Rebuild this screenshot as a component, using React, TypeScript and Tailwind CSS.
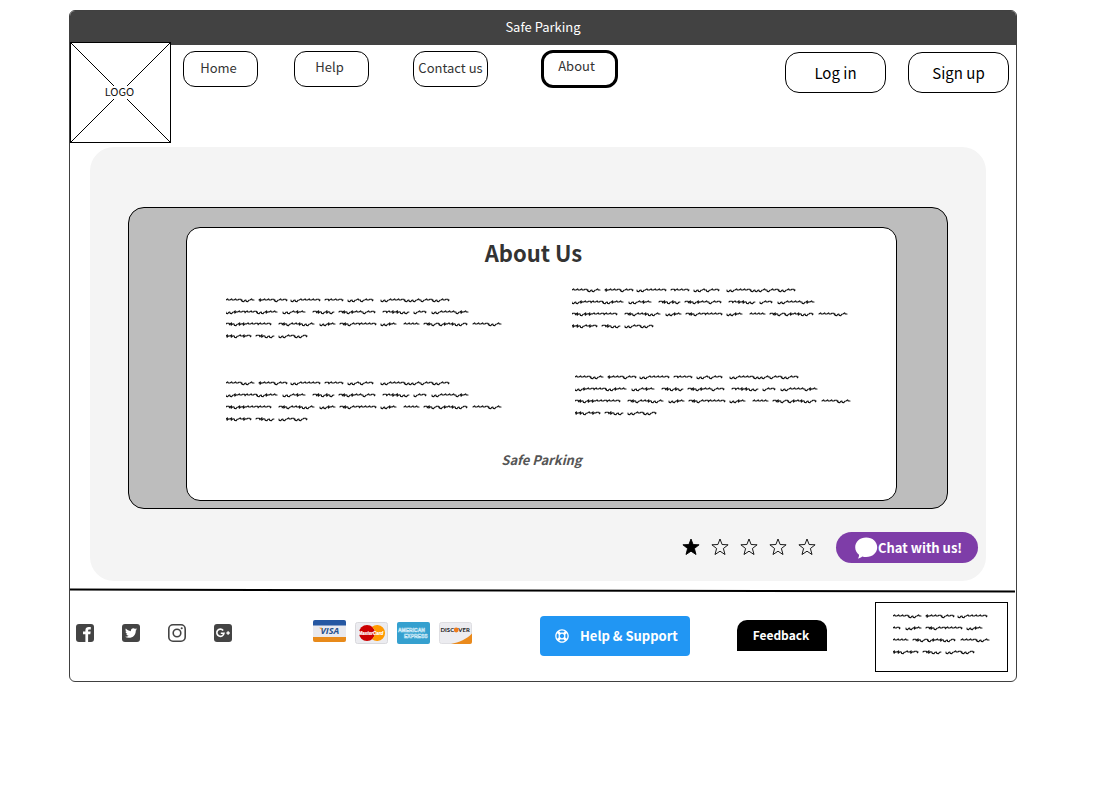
import React from "react";
import { FaRegLifeRing, FaTwitter } from "react-icons/fa";

/* ---------- Scribbled placeholder copy ---------- */

type Word = [start: number, end: number, strokes: string];

// Each stroke is a list of pen moves inside a cell that is one unit wide.
const STROKES: Record<string, [number, number][]> = {
  n: [[0.4, -1.1], [0.15, 1], [0.45, 0.1]],
  r: [[0.2, -0.8], [0.55, 0], [0.1, 1.6], [0.15, -0.8]],
  u: [[0.05, 1.5], [0.4, 0.1], [0.25, -1.4], [0.3, -0.2]],
  x: [[0.35, -1.2], [-0.1, 2.4], [0.4, -1.3], [0.35, 0.1]],
};

function wordPath([start, end, strokes]: Word, y: number) {
  const cell = (end - start) / strokes.length;
  let d = `M${start} ${y}`;
  for (const key of strokes) {
    for (const [dx, dy] of STROKES[key]) {
      d += `l${(dx * cell).toFixed(2)} ${dy}`;
    }
  }
  return d;
}

const PARAGRAPH: Word[][] = [
  [[0, 28, "nnnruun"], [33, 61, "xnnrunr"], [65, 94, "uunnnnr"], [99, 117, "rnnr"], [122, 147, "uununr"], [155, 223, "uunnnruuununruunr"]],
  [[0, 51, "uuxnrnnruuxnn"], [57, 79, "uunxn"], [87, 108, "rxuxu"], [113, 149, "rxuxnnunr"], [157, 183, "rnxxuu"], [188, 200, "unr"], [206, 242, "uunnnnuxn"]],
  [[0, 45, "rxuxxnnrnnr"], [53, 88, "rxunnxuun"], [94, 109, "uuxn"], [114, 150, "rxunrnnnr"], [155, 170, "uuxn"], [178, 193, "nnnn"], [198, 241, "rxuruxnxuur"], [247, 275, "nnnruun"]],
  [[0, 25, "xxunxr"], [30, 48, "rxuu"], [53, 81, "uunruur"]],
];

const NOTE: Word[][] = [
  [[0, 28, "nnnruun"], [33, 61, "xnnrunr"], [65, 94, "uunnnnr"]],
  [[0, 7, "nr"], [13, 28, "uuxn"], [33, 69, "rxunrnnnr"], [74, 89, "uuxn"]],
  [[0, 15, "nnnn"], [20, 62, "rxuruxnxuur"], [68, 96, "nnnruun"]],
  [[0, 25, "xxunxr"], [30, 48, "rxuu"], [53, 81, "uunruur"]],
];

function Scribble({ lines, width }: { lines: Word[][]; width: number }) {
  return (
    <svg
      width={width}
      height={48}
      viewBox={`0 0 ${width} 48`}
      className="block shrink-0"
      fill="none"
      stroke="#111"
      strokeWidth="1.1"
      strokeLinecap="round"
      strokeLinejoin="round"
      aria-hidden="true"
    >
      {lines.map((words, row) => (
        <path key={row} d={words.map((w) => wordPath(w, 6 + row * 12)).join("")} />
      ))}
    </svg>
  );
}

/* ---------- Icons ---------- */

function FacebookIcon() {
  return (
    <svg viewBox="0 0 18 18" className="block size-[18px]" aria-hidden="true">
      <rect width="18" height="18" rx="3" fill="#444" />
      <path d="M9.4 18V10.2H7V7.6h2.4V6.2C9.4 4 10.8 3 12.6 3h2.2v2.5h-1.4c-.9 0-1.3.4-1.3 1.2v.9h2.6l-.4 2.6h-2.2V18z" fill="#fff" />
    </svg>
  );
}

function TwitterIcon() {
  return (
    <span className="flex size-[18px] items-center justify-center rounded-[3px] bg-[#444] text-white">
      <FaTwitter className="size-3" />
    </span>
  );
}

function InstagramIcon() {
  return (
    <svg viewBox="0 0 18 18" className="block size-[18px]" fill="none" stroke="#444" aria-hidden="true">
      <rect x=".8" y=".8" width="16.4" height="16.400" rx="4.200" strokeWidth="1.600" />
      <circle cx="9" cy="9" r="3.800" strokeWidth="1.600" />
      <circle cx="13.700" cy="4.300" r="1.050" fill="#444" stroke="none" />
    </svg>
  );
}

function GooglePlusIcon() {
  return (
    <svg viewBox="0 0 18 18" className="block size-[18px]" aria-hidden="true">
      <rect width="18" height="18" rx="3" fill="#444" />
      <path d="M9.200 6.400A3.600 3.600 0 1 0 10 9.200H6.800" fill="none" stroke="#fff" strokeWidth="1.600" />
      <path d="M12.400 9h3.400M14.100 7.300v3.400" stroke="#fff" strokeWidth="1.400" />
    </svg>
  );
}

function Star({ filled }: { filled?: boolean }) {
  return (
    <svg viewBox="0 0 18 18" className="block size-[18px]" aria-hidden="true">
      <path
        d="M9 1l2.1 5.500 6 .3-4.700 3.700 1.600 6L9 13.200 4 16.500l1.600-6L.9 6.800l6-.3z"
        fill={filled ? "#000" : "none"}
        stroke="#000"
        strokeWidth="0.9"
      />
    </svg>
  );
}

function ChatIcon() {
  return (
    <svg viewBox="0 0 24 24" className="block size-6" aria-hidden="true">
      <path d="M12.2 1.5c6.2 0 11 4.2 11 9.8s-4.8 9.8-11 9.8c-1.4 0-2.8-.2-4-.6-1.1 1-2.600 1.800-4.400 2 .9-1.100 1.400-2.400 1.200-3.800C2.700 16.900 1.200 14.300 1.200 11.300c0-5.600 4.800-9.800 11-9.800z" fill="#fff" />
    </svg>
  );
}

function VisaCard() {
  return (
    <svg viewBox="0 0 33 22" width="33" height="22" className="mb-0.5 block" role="img" aria-label="Visa">
      <rect width="33" height="22" rx="2" fill="#e9e9ee" />
      <path d="M2 0h29a2 2 0 0 1 2 2v3.500H0V2a2 2 0 0 1 2-2z" fill="#2557a2" />
      <path d="M0 17h33v3a2 2 0 0 1-2 2H2a2 2 0 0 1-2-2z" fill="#e88a1a" />
      <text x="16.800" y="14.300" textAnchor="middle" fontSize="9" fontWeight="700" fontStyle="italic" fontFamily="Open Sans, sans-serif" fill="#26528f">VISA</text>
      <path d="M6.300 7.800h2.600l.7 3.200C9 9.500 7.900 8.400 6.300 7.900z" fill="#e88a1a" />
    </svg>
  );
}

function MasterCard() {
  return (
    <svg viewBox="0 0 33 22" width="33" height="22" className="block" role="img" aria-label="MasterCard">
      <rect x=".5" y=".5" width="32" height="21" rx="2" fill="#ececf0" stroke="#d9d9dd" />
      <circle cx="12" cy="11" r="8" fill="#c00" />
      <path d="M17 4.800a8 8 0 1 1 0 12.400 8 8 0 0 0 0-12.400z" fill="#f90" />
      <text x="16" y="13" textAnchor="middle" fontSize="4.500" fontWeight="700" fontStyle="italic" fontFamily="Liberation Sans, sans-serif" fill="#fff" stroke="#fff" strokeWidth=".2">MasterCard</text>
    </svg>
  );
}

function AmexCard() {
  return (
    <svg viewBox="0 0 33 22" width="33" height="22" className="block" role="img" aria-label="American Express">
      <rect width="33" height="22" rx="2" fill="#35a0cf" />
      <g fill="#35a0cf" stroke="#d5edf8" strokeWidth=".5" fontFamily="Liberation Sans, sans-serif" fontWeight="700">
        <text x="1" y="9.500" fontSize="5">AMERICAN</text>
        <text x="7" y="16" fontSize="5">EXPRESS</text>
      </g>
    </svg>
  );
}

function DiscoverCard() {
  return (
    <svg viewBox="0 0 33 22" width="33" height="22" className="block" role="img" aria-label="Discover">
      <rect x=".5" y=".5" width="32" height="21" rx="2" fill="#ececf0" stroke="#dedee2" />
      <path d="M12 22C20 20.500 28 17 33 11.500V20a2 2 0 0 1-2 2z" fill="#ea8a1c" />
      <g fill="#222" fontSize="6" fontWeight="700" fontFamily="Lato, sans-serif">
        <text x="1.500" y="10">DISC</text>
        <text x="19.300" y="10">VER</text>
      </g>
      <circle cx="17.200" cy="8" r="2.400" fill="#ee7b1b" />
    </svg>
  );
}

/* ---------- Page ---------- */

const NAV_LINK =
  "flex h-9 w-[75px] items-center justify-center rounded-xl border border-black text-[13px] leading-5 whitespace-nowrap text-[#333]";

const ACCOUNT_BUTTON =
  "flex h-[41px] w-[101px] items-center justify-center rounded-[14px] border border-black bg-white text-[15px] leading-5 text-black";

function Header() {
  return (
    <div className="flex items-start">
      <div className="-mt-[3px] shrink-0">
        <svg viewBox="0 0 101 101" className="block size-[101px]" role="img" aria-label="Logo">
          <rect x=".5" y=".5" width="100" height="100" fill="#fff" stroke="#000" />
          <path d="M0 0l44 44M57 57l44 44M101 0L57 44M44 57L0 101" stroke="#000" />
          <text x="49.500" y="54" textAnchor="middle" fontSize="11" fontFamily="Noto Sans CJK SC, sans-serif" fill="#111">
            LOGO
          </text>
        </svg>
      </div>
      <nav className="mt-[5px] ml-3 flex items-center">
        <a href="#home" className={`${NAV_LINK} pr-1 pb-0.5`}>Home</a>
        <a href="#help" className={`${NAV_LINK} ml-9 pr-1 pb-1`}>Help</a>
        <a href="#contact" className={`${NAV_LINK} ml-11 pb-0.5`}>Contact us</a>
        <a
          href="#about"
          aria-current="page"
          className="ml-[53px] flex h-[38px] w-[77px] items-center justify-center rounded-xl border-3 border-black pr-1.5 pb-1.5 text-[13px] leading-5 text-[#333]"
        >
          About
        </a>
      </nav>
      <div className="mt-[7px] mr-[7px] ml-auto flex gap-[22px]">
        <button type="button" className={ACCOUNT_BUTTON}>Log in</button>
        <button type="button" className={ACCOUNT_BUTTON}>Sign up</button>
      </div>
    </div>
  );
}

function AboutPanel() {
  return (
    <section className="mr-[38px] ml-[38px] rounded-2xl border border-black bg-[#bdbdbd] pt-[19px] pr-[50px] pb-[7px] pl-[57px]">
      <div className="rounded-[14px] border border-black bg-white">
        <h1 className="pt-2 pr-4 text-center text-[22px] leading-8 font-bold text-[#333]">About Us</h1>
        <div className="mt-4 flex gap-[70px] pl-[39px]">
          <div className="flex flex-col gap-[35px] pt-2.5">
            <Scribble lines={PARAGRAPH} width={276} />
            <Scribble lines={PARAGRAPH} width={276} />
          </div>
          <div className="flex flex-col gap-[39px]">
            <Scribble lines={PARAGRAPH} width={276} />
            <div className="pl-[3px]">
              <Scribble lines={PARAGRAPH} width={276} />
            </div>
          </div>
        </div>
        <p className="pt-[25px] pb-[30px] text-center text-[13px] leading-5 font-bold text-[#555] italic">Safe Parking</p>
      </div>
    </section>
  );
}

function Footer() {
  return (
    <footer className="flex items-start pt-[9px] pr-2 pb-[9px] pl-1.5">
      <div className="mt-[22px] flex gap-7 text-[#444]">
        <a href="#facebook" aria-label="Facebook"><FacebookIcon /></a>
        <a href="#twitter" aria-label="Twitter"><TwitterIcon /></a>
        <a href="#instagram" aria-label="Instagram"><InstagramIcon /></a>
        <a href="#google-plus" aria-label="Google Plus"><GooglePlusIcon /></a>
      </div>
      <div className="mt-[18px] ml-[81px] flex items-end gap-[9px]">
        <VisaCard />
        <MasterCard />
        <AmexCard />
        <DiscoverCard />
      </div>
      <button
        type="button"
        className="mt-3.5 ml-auto flex h-10 w-[150px] items-center rounded bg-[#2196f3] pl-[15px] text-[13px] leading-5 font-bold whitespace-nowrap text-white"
      >
        <FaRegLifeRing className="mr-[11px] size-3.5" />
        Help &amp; Support
      </button>
      <button
        type="button"
        className="mt-[18px] ml-[47px] h-[31px] w-[90px] rounded-t-[10px] bg-black pr-0.5 pb-0.5 text-[12px] leading-5 font-bold text-white"
      >
        Feedback
      </button>
      <div className="ml-12 w-[133px] border border-black pt-[7px] pb-[13px] pl-[17px]">
        <Scribble lines={NOTE} width={97} />
      </div>
    </footer>
  );
}

export default function App() {
  return (
    <div className="pt-2.5 pr-[91px] pb-10 pl-[69px] font-['Noto_Sans_CJK_SC',sans-serif]">
      <div className="rounded-md border border-[#404040] bg-white">
        <header className="rounded-t-[5px] bg-[#424242] pt-1.5 pb-2 text-center text-[13px] leading-5 text-white">
          Safe Parking
        </header>
        <Header />
        <main className="mt-1 mr-[30px] ml-5 rounded-3xl bg-[#f4f4f4] pt-[60px] pb-[18px]">
          <AboutPanel />
          <div className="mt-[23px] mr-2 flex items-center justify-end">
            <div className="mr-5 flex gap-[11px] pb-0.5">
              {[1, 2, 3, 4, 5].map((n) => (
                <button key={n} type="button" aria-label={`Rate ${n}`}>
                  <Star filled={n === 1} />
                </button>
              ))}
            </div>
            <button
              type="button"
              className="flex h-[31px] w-[142px] items-center rounded-full bg-[#7e3da8] pl-[18px] text-[13px] leading-5 font-bold whitespace-nowrap text-white"
            >
              <ChatIcon />
              Chat with us!
            </button>
          </div>
        </main>
        <svg viewBox="0 0 946 5" preserveAspectRatio="none" className="mt-[7px] block h-[5px] w-full" aria-hidden="true">
          <path d="M0 1.500L945 3.500" stroke="#000" strokeWidth="2" />
        </svg>
        <Footer />
      </div>
    </div>
  );
}
